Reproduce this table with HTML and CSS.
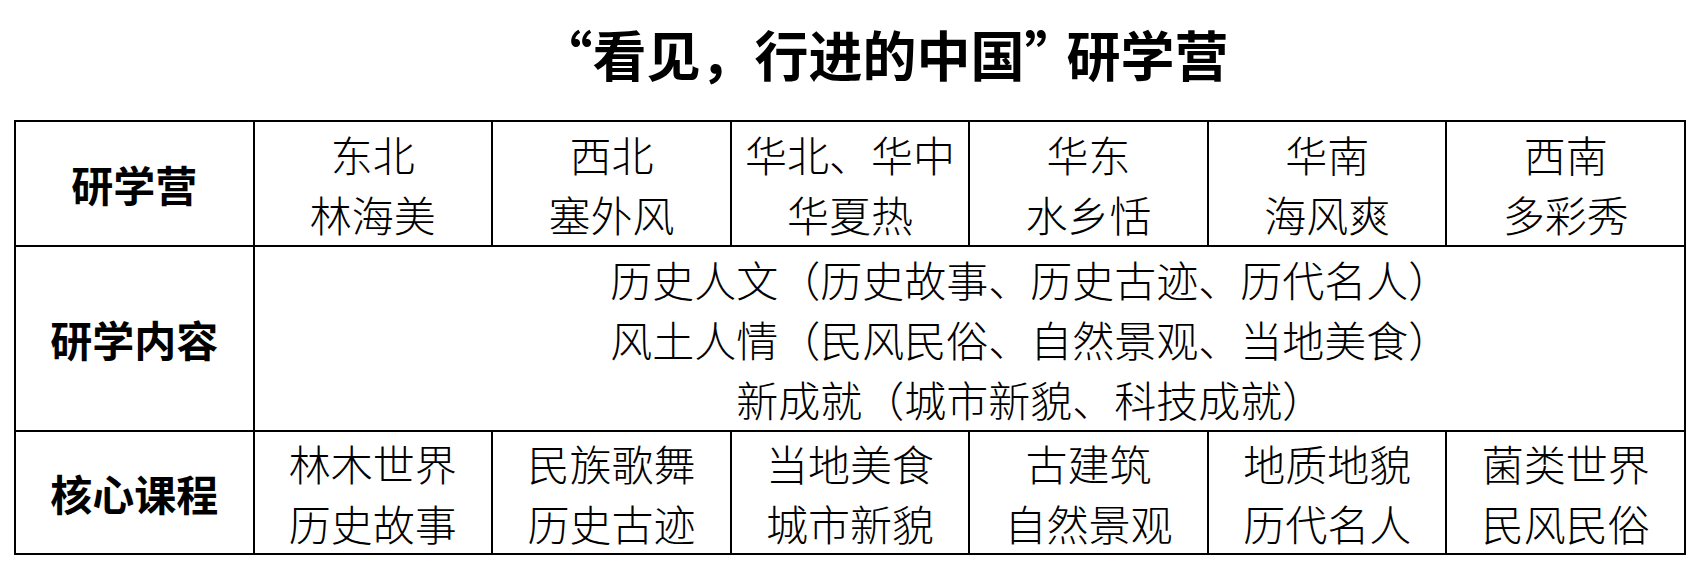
FILE: index.html
```html
<!DOCTYPE html>
<html lang="zh-CN">
<head>
<meta charset="utf-8">
<title>“看见，行进的中国”研学营</title>
<link rel="stylesheet" href="styles.css">
</head>
<body>
<h1 class="title"><span class="q-open">“</span>看见，行进的中国<span class="q-close">”</span>研学营</h1>
<div class="grid">
  <div class="cell head"><span>研学营</span></div>
  <div class="cell"><span>东北</span><span>林海美</span></div>
  <div class="cell"><span>西北</span><span>塞外风</span></div>
  <div class="cell"><span>华北、华中</span><span>华夏热</span></div>
  <div class="cell"><span>华东</span><span>水乡恬</span></div>
  <div class="cell"><span>华南</span><span>海风爽</span></div>
  <div class="cell"><span>西南</span><span>多彩秀</span></div>

  <div class="cell head"><span>研学内容</span></div>
  <div class="cell wide">
    <span>历史人文（历史故事、历史古迹、历代名人）</span>
    <span>风土人情（民风民俗、自然景观、当地美食）</span>
    <span>新成就（城市新貌、科技成就）</span>
  </div>

  <div class="cell head"><span>核心课程</span></div>
  <div class="cell"><span>林木世界</span><span>历史故事</span></div>
  <div class="cell"><span>民族歌舞</span><span>历史古迹</span></div>
  <div class="cell"><span>当地美食</span><span>城市新貌</span></div>
  <div class="cell"><span>古建筑</span><span>自然景观</span></div>
  <div class="cell"><span>地质地貌</span><span>历代名人</span></div>
  <div class="cell"><span>菌类世界</span><span>民风民俗</span></div>
</div>
</body>
</html>
```

FILE: styles.css
```css
html, body {
  margin: 0;
  padding: 0;
  background: #fff;
  color: #000;
}

body {
  width: 1706px;
  font-family: "Noto Sans CJK SC", "Noto Sans", sans-serif;
}

.title {
  margin: 0;
  padding: 27px 0 0 73px;
  font-size: 54px;
  line-height: 54px;
  font-weight: 700;
  text-align: center;
}

.q-open {
  margin-left: -12px;
}

.q-close {
  letter-spacing: -12px;
}

.grid {
  box-sizing: border-box;
  width: 1672px;
  margin: 39px 0 0 14px;
  padding: 2px;
  display: grid;
  grid-template-columns: repeat(7, 1fr);
  grid-template-rows: 123px 183px 121px;
  gap: 2px;
  background: #000;
}

.cell {
  background: #fff;
  display: flex;
  flex-direction: column;
  align-items: center;
  justify-content: center;
  text-align: center;
  font-size: 42px;
  line-height: 60px;
  font-weight: 300;
  white-space: nowrap;
}

.cell span {
  display: block;
}

.head {
  font-weight: 700;
}

.wide {
  grid-column: span 6;
  padding-left: 122px;
}
```
